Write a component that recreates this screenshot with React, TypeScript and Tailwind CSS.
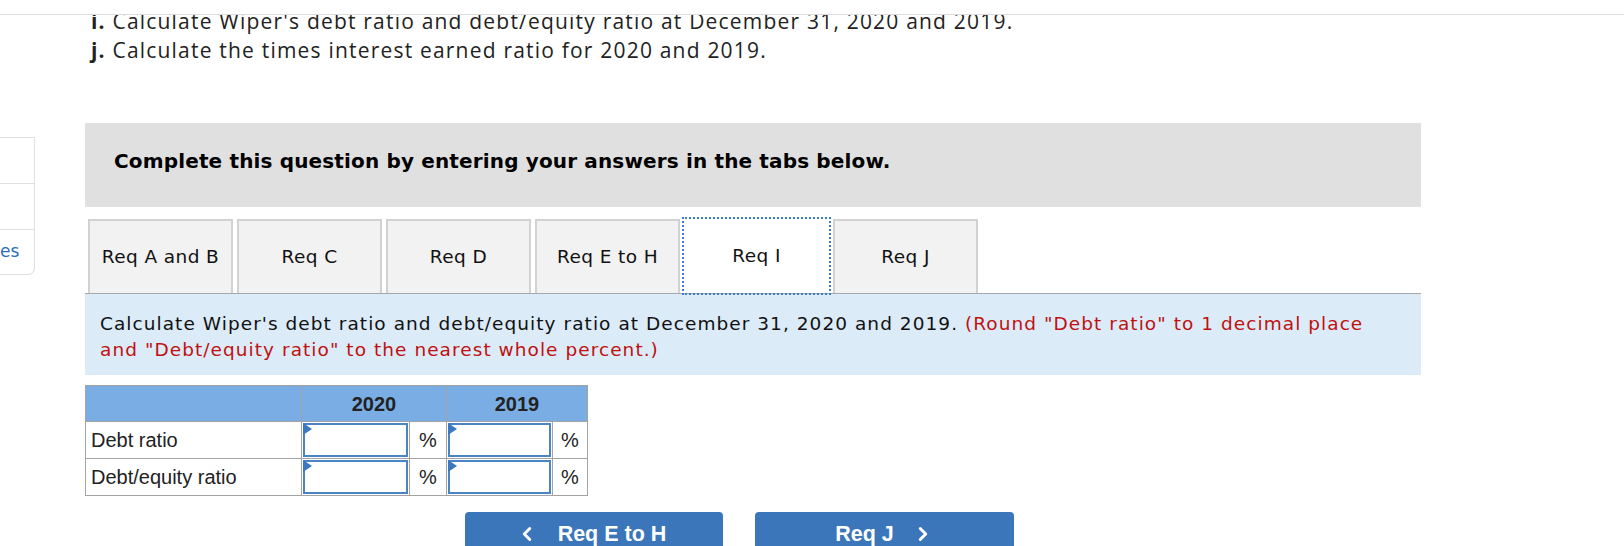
import { ChevronLeft, ChevronRight } from "lucide-react";

const tabs = ["Req A and B", "Req C", "Req D", "Req E to H", "Req I", "Req J"];

const rows = ["Debt ratio", "Debt/equity ratio"];

function InputCell() {
  return (
    <td className="border border-[#a3a3a3] p-[1px]">
      <div className="relative h-[34px] border-2 border-[#4a84c4] bg-white">
        <span className="absolute -left-[2px] -top-[2px] w-0 h-0 border-y-[6px] border-y-transparent border-l-[9px] border-l-[#3a78c2]" />
      </div>
    </td>
  );
}

export default function App() {
  return (
    <div className="w-[1624px] h-[546px] overflow-hidden bg-white">
      <div className="h-[15px] border-b border-[#dcdcdc]" />
      <div className="flex">
        {/* side panel, mostly off screen */}
        <aside className="w-[85px] shrink-0 pt-[122px]">
          <div className="w-[35px] border border-l-0 border-[#e0e0e0] rounded-br-[7px]">
            <div className="h-[46px] border-b border-[#e0e0e0]" />
            <div className="h-[46px] border-b border-[#e0e0e0]" />
            <div className="h-[44px] flex items-center font-['DejaVu_Sans',sans-serif] text-[17px] text-[#2d6fb7]">
              es
            </div>
          </div>
        </aside>

        <main className="w-[1336px] shrink-0">
          <div className="h-[50px] overflow-hidden pl-[6px]">
            <div className="-mt-[8px] font-['Open_Sans',sans-serif] text-[21px] tracking-[1.2px] leading-[29px] text-[#222]">
              <p>
                <span className="font-bold">i.</span> Calculate Wiper's debt ratio and debt/equity ratio at December 31, 2020 and 2019.
              </p>
              <p>
                <span className="font-bold">j.</span> Calculate the times interest earned ratio for 2020 and 2019.
              </p>
            </div>
          </div>

          <div className="mt-[58px] h-[84px] bg-[#e0e0e0] pl-[29px] pt-[27px]">
            <p className="font-['DejaVu_Sans',sans-serif] font-bold text-[20px] tracking-[0.15px] leading-[22px] text-black">
              Complete this question by entering your answers in the tabs below.
            </p>
          </div>

          <div className="mt-[12px] flex gap-[4px] pl-[3px] border-b border-[#a8a8a8]">
            {tabs.map((t) =>
              t === "Req I" ? (
                <div
                  key={t}
                  className="w-[145px] h-[74px] flex items-center justify-center bg-white outline-2 outline-dotted outline-[#3d7cc9] font-['DejaVu_Sans',sans-serif] text-[18.5px] tracking-[0.4px] text-[#111]"
                >
                  {t}
                </div>
              ) : (
                <div
                  key={t}
                  className="w-[145px] h-[74px] flex items-center justify-center bg-[#f2f2f2] border-2 border-b-0 border-[#d2d2d2] font-['DejaVu_Sans',sans-serif] text-[18.5px] tracking-[0.4px] text-[#111]"
                >
                  {t}
                </div>
              )
            )}
          </div>

          <div className="h-[81px] bg-[#dbebf8] pl-[15px] pt-[17px] font-['DejaVu_Sans',sans-serif] text-[18.5px] tracking-[1.05px] leading-[26px] text-[#111]">
            <p>
              Calculate Wiper's debt ratio and debt/equity ratio at December 31, 2020 and 2019.{" "}
              <span className="text-[#c0100f]">
                (Round "Debt ratio" to 1 decimal place
                <br />
                and "Debt/equity ratio" to the nearest whole percent.)
              </span>
            </p>
          </div>

          <table className="mt-[10px] border-collapse border border-[#a3a3a3] font-['Liberation_Sans',Arial,sans-serif] text-[20px] text-[#222]">
            <colgroup>
              <col className="w-[216px]" />
              <col className="w-[108px]" />
              <col className="w-[37px]" />
              <col className="w-[106px]" />
              <col className="w-[35px]" />
            </colgroup>
            <thead>
              <tr className="h-[36px] bg-[#79ade4]">
                <th className="border border-[#a3a3a3]" />
                <th colSpan={2} className="border border-[#a3a3a3] font-bold text-center">2020</th>
                <th colSpan={2} className="border border-[#a3a3a3] font-bold text-center">2019</th>
              </tr>
            </thead>
            <tbody>
              {rows.map((r) => (
                <tr key={r} className="h-[37px]">
                  <td className="border border-[#a3a3a3] pl-[5px]">{r}</td>
                  <InputCell />
                  <td className="border border-[#a3a3a3] text-center">%</td>
                  <InputCell />
                  <td className="border border-[#a3a3a3] text-center">%</td>
                </tr>
              ))}
            </tbody>
          </table>

          <div className="mt-[16px] ml-[380px] flex gap-[32px] font-['Liberation_Sans',Arial,sans-serif] font-bold text-[21.5px] text-white">
            <button className="w-[258px] h-[44px] rounded-t-[4px] bg-[#3a76b9] flex items-center justify-center gap-[20px] pr-[6px]">
              <ChevronLeft className="w-[22px] h-[22px]" strokeWidth={3.2} />
              <span>Req E to H</span>
            </button>
            <button className="w-[259px] h-[44px] rounded-t-[4px] bg-[#3a76b9] flex items-center justify-center gap-[18px]">
              <span>Req J</span>
              <ChevronRight className="w-[22px] h-[22px]" strokeWidth={3.2} />
            </button>
          </div>
        </main>
      </div>
    </div>
  );
}
